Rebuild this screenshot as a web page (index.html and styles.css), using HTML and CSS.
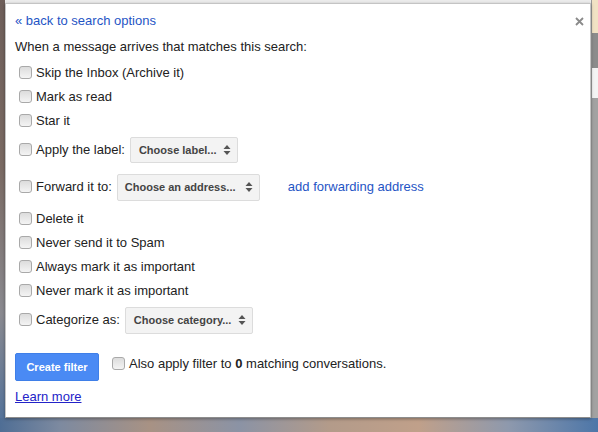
FILE: index.html
```html
<!DOCTYPE html>
<html lang="en">
<head>
  <meta charset="UTF-8" />
  <meta name="viewport" content="width=device-width, initial-scale=1.0" />
  <title>Create filter</title>
  <link rel="stylesheet" href="styles.css">
</head>
<body>
<div class="screen">
  <div class="stage">
    <div class="edge-left"></div>
    <div class="middle">
      <div class="dialog">
        <svg class="close" width="9" height="9" viewBox="0 0 9 9">
          <path d="M1 1 L8 8 M8 1 L1 8" stroke="#8a8a8a" stroke-width="1.8" fill="none" />
        </svg>
        <a class="back" href="#">&laquo; back to search options</a>
        <div class="intro">When a message arrives that matches this search:</div>

        <label class="row"><input type="checkbox" class="check" /><span>Skip the Inbox (Archive it)</span></label>
        <label class="row"><input type="checkbox" class="check" /><span>Mark as read</span></label>
        <label class="row"><input type="checkbox" class="check" /><span>Star it</span></label>
        <div class="row row-label">
          <input type="checkbox" class="check" /><span>Apply the label:</span>
          <div class="select select-label"><span>Choose label...</span><svg width="8" height="12" viewBox="0 0 8 12"><path d="M4 1 L7.5 5 L0.5 5 Z M4 11 L7.5 7 L0.5 7 Z" fill="#555" /></svg></div>
        </div>
        <div class="row row-forward">
          <input type="checkbox" class="check" /><span>Forward it to:</span>
          <div class="select select-address"><span>Choose an address...</span><svg width="8" height="12" viewBox="0 0 8 12"><path d="M4 1 L7.5 5 L0.5 5 Z M4 11 L7.5 7 L0.5 7 Z" fill="#555" /></svg></div>
          <a class="add-link" href="#">add forwarding address</a>
        </div>
        <label class="row"><input type="checkbox" class="check" /><span>Delete it</span></label>
        <label class="row"><input type="checkbox" class="check" /><span>Never send it to Spam</span></label>
        <label class="row"><input type="checkbox" class="check" /><span>Always mark it as important</span></label>
        <label class="row"><input type="checkbox" class="check" /><span>Never mark it as important</span></label>
        <div class="row row-category">
          <input type="checkbox" class="check" /><span>Categorize as:</span>
          <div class="select select-category"><span>Choose category...</span><svg width="8" height="12" viewBox="0 0 8 12"><path d="M4 1 L7.5 5 L0.5 5 Z M4 11 L7.5 7 L0.5 7 Z" fill="#555" /></svg></div>
        </div>

        <div class="actions">
          <button class="create">Create filter</button>
          <label class="also"><input type="checkbox" class="check" /><span>Also apply filter to <b>0</b> matching conversations.</span></label>
        </div>
        <a class="learn" href="#">Learn more</a>
      </div>
    </div>
    <div class="edge-right">
      <div class="seg seg-beige"></div>
      <div class="seg seg-dark"></div>
      <div class="seg seg-white"></div>
      <div class="seg seg-gray"></div>
    </div>
  </div>
  <div class="desktop"></div>
</div>
</body>
</html>
```

FILE: styles.css
```css
* {
  padding: 0;
  margin: 0;
  box-sizing: border-box;
}
body {
  background: #5a6f8c;
  font-family: "Liberation Sans", Arial, sans-serif;
  font-size: 13px;
  color: #222;
}
.screen {
  width: 598px;
  height: 432px;
  overflow: hidden;
}
.stage {
  display: flex;
  height: 418px;
}
.edge-left {
  width: 5px;
  background: linear-gradient(#6e5f5a 0%, #7a6a63 40%, #8a8a90 75%, #55739a 100%);
}
.middle {
  width: 586px;
  padding-top: 3px;
  background: #ececec;
}
.edge-right {
  width: 7px;
  display: flex;
  flex-direction: column;
  border-left: 1px solid #9a9a9a;
}
.seg-beige {
  height: 33px;
  background: #f1e2c4;
}
.seg-dark {
  height: 35px;
  background: #8c8c8c;
}
.seg-white {
  height: 30px;
  background: #f4f4f4;
}
.seg-gray {
  flex: 1;
  background: #a2a2a2;
}
.desktop {
  height: 14px;
  background: linear-gradient(90deg, #4f6e95 0%, #7d8aa0 10%, #a89284 25%, #8b93a5 40%, #b39b8a 55%, #c0a08a 70%, #8e99ad 85%, #4d76a8 100%);
}
.dialog {
  position: relative;
  height: 415px;
  background: #fff;
  border: 1px solid #c4c4c4;
  border-bottom-color: #8d8d8d;
  padding: 9px 0 0 9px;
  box-shadow: 0 1px 3px rgba(0, 0, 0, 0.35);
}
.close {
  position: absolute;
  top: 13px;
  right: 6px;
}
.back {
  display: block;
  width: max-content;
  color: #1f55c5;
  text-decoration: none;
  line-height: 16px;
}
.intro {
  margin-top: 10px;
  line-height: 16px;
}
.row {
  display: flex;
  align-items: center;
  height: 24px;
  line-height: 16px;
}
.intro + .row {
  margin-top: 6px;
}
.row-label {
  height: 34px;
}
.row-forward {
  height: 40px;
}
.row-category {
  height: 34px;
}
.check {
  appearance: none;
  -webkit-appearance: none;
  width: 13px;
  height: 13px;
  margin: 0 4px 2px 4px;
  border: 1px solid #a9a9a9;
  border-radius: 3px;
  background: linear-gradient(#dcdcdc, #f4f4f4);
  flex: none;
}
.select {
  display: flex;
  align-items: center;
  justify-content: space-between;
  height: 26px;
  margin-left: 5px;
  padding: 0 6px 0 8px;
  background: #f3f3f3;
  border: 1px solid #dcdcdc;
  border-radius: 2px;
  font-size: 11px;
  font-weight: bold;
  color: #444;
}
.select-label {
  width: 108px;
}
.select-address {
  width: 143px;
  height: 27px;
  padding-left: 7px;
}
.select-category {
  width: 128px;
  height: 27px;
}
.add-link {
  margin-left: 28px;
  color: #1f55c5;
  text-decoration: none;
}
.actions {
  display: flex;
  align-items: flex-start;
  margin-top: 16px;
}
.create {
  width: 84px;
  height: 28px;
  background: #4a8af4;
  border: 1px solid #3f7fe8;
  border-radius: 2px;
  color: #fff;
  font-family: "Liberation Sans", Arial, sans-serif;
  font-size: 11px;
  font-weight: bold;
}
.also {
  display: flex;
  align-items: center;
  margin: 3px 0 0 9px;
  line-height: 16px;
}
.also b {
  font-weight: bold;
}
.learn {
  display: block;
  width: max-content;
  margin-top: 8px;
  color: #2323c8;
  line-height: 16px;
}
```
